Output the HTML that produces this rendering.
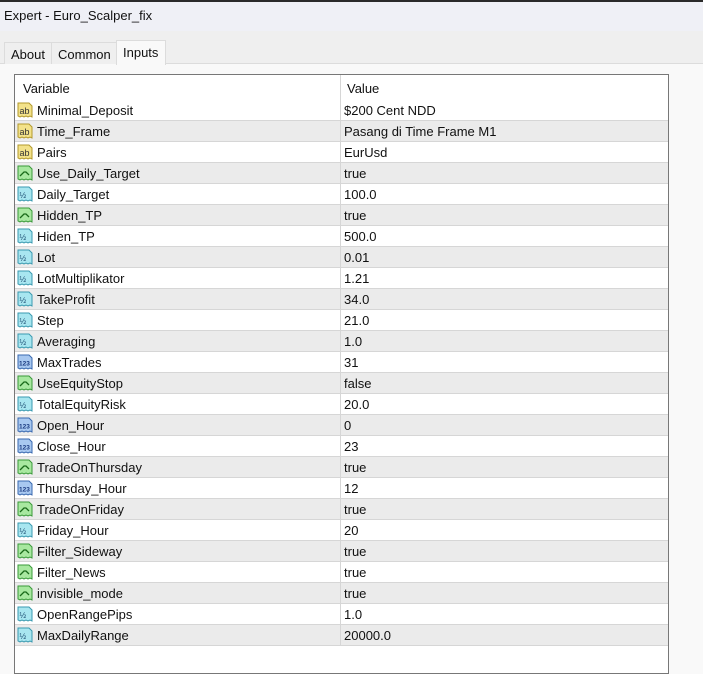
<!DOCTYPE html>
<html><head><meta charset="utf-8"><style>
*{margin:0;padding:0;box-sizing:border-box}
body{width:703px;height:663px;overflow:hidden;background:#f9f9f9;font-family:"Liberation Sans",sans-serif;font-size:13px;color:#111;position:relative}
#title{position:absolute;left:0;top:0;width:703px;height:31px;background:#eff0f6;border-top:2px solid #2a2a2a}
#title span{position:absolute;left:4px;top:6px;font-size:13px}
#tabbar{position:absolute;left:0;top:31px;width:703px;height:33px;background:#efefef;border-bottom:1px solid #dcdcdc}
.tab{position:absolute;top:11px;height:22px;border:1px solid #dcdcdc;border-bottom:none;background:#efefef;padding:4px 6px;font-size:13px}
.tab.sel{top:9px;height:25px;background:#f9f9f9;padding-top:4px}
#table{position:absolute;left:14px;top:74px;width:655px;height:600px;border:1px solid #777;background:#fff}
.row{position:absolute;left:0;width:653px;height:21px;border-bottom:1px solid #d6d6d6}
.row.alt{background:#ebebeb}
.row .n{position:absolute;left:22px;top:3px}
.row .v{position:absolute;left:329px;top:3px}
.row .d{position:absolute;left:325px;top:0;width:1px;height:21px;background:#d6d6d6}
.row svg{position:absolute;left:2px;top:2px}
#hdr{position:absolute;left:0;top:0;width:653px;height:25px;background:#fff}
#hdr .a{position:absolute;left:8px;top:6px}
#hdr .b{position:absolute;left:332px;top:6px}
#hdr .d{position:absolute;left:325px;top:0;width:1px;height:25px;background:#d6d6d6}
</style></head><body>
<div id="title"><span>Expert - Euro_Scalper_fix</span></div>
<div id="tabbar">
<div class="tab" style="left:4px;width:48px">About</div>
<div class="tab" style="left:51px;width:66px">Common</div>
<div class="tab sel" style="left:116px;width:50px">Inputs</div>
</div>
<div id="table">
<div id="hdr"><span class="a">Variable</span><div class="d"></div><span class="b">Value</span></div>
<div id="rows"></div>
</div>
<script>
var ab='<svg width="17" height="17" viewBox="0 0 17 17"><path d="M1 1h11l3 3v11l-2-1-2 1-2-1-2 1-2-1-2 1-2-1z" fill="#f3e28a" stroke="#b39a2c"/><text x="2.5" y="12" font-size="9" font-family="Liberation Sans" fill="#333">ab</text></svg>';
var bl='<svg width="17" height="17" viewBox="0 0 17 17"><path d="M1 1h11l3 3v11l-2-1-2 1-2-1-2 1-2-1-2 1-2-1z" fill="#a8e8a0" stroke="#3a9a3a"/><path d="M3 11l4-4h2l3 3" stroke="#1a6a1a" fill="none" stroke-width="1.3"/></svg>';
var db='<svg width="17" height="17" viewBox="0 0 17 17"><path d="M1 1h11l3 3v11l-2-1-2 1-2-1-2 1-2-1-2 1-2-1z" fill="#a8e6f0" stroke="#3a9ab0"/><text x="2.5" y="12" font-size="8" font-family="Liberation Sans" fill="#1a4a70">½</text></svg>';
var it='<svg width="17" height="17" viewBox="0 0 17 17"><path d="M1 1h11l3 3v11l-2-1-2 1-2-1-2 1-2-1-2 1-2-1z" fill="#a8c8f0" stroke="#3a6ab0"/><text x="2" y="11.5" font-size="6.5" font-weight="bold" font-family="Liberation Sans" fill="#1a3a80">123</text></svg>';
var d=[[ab,"Minimal_Deposit","$200 Cent NDD"],[ab,"Time_Frame","Pasang di Time Frame M1"],[ab,"Pairs","EurUsd"],[bl,"Use_Daily_Target","true"],[db,"Daily_Target","100.0"],[bl,"Hidden_TP","true"],[db,"Hiden_TP","500.0"],[db,"Lot","0.01"],[db,"LotMultiplikator","1.21"],[db,"TakeProfit","34.0"],[db,"Step","21.0"],[db,"Averaging","1.0"],[it,"MaxTrades","31"],[bl,"UseEquityStop","false"],[db,"TotalEquityRisk","20.0"],[it,"Open_Hour","0"],[it,"Close_Hour","23"],[bl,"TradeOnThursday","true"],[it,"Thursday_Hour","12"],[bl,"TradeOnFriday","true"],[db,"Friday_Hour","20"],[bl,"Filter_Sideway","true"],[bl,"Filter_News","true"],[bl,"invisible_mode","true"],[db,"OpenRangePips","1.0"],[db,"MaxDailyRange","20000.0"]];
var h='';d.forEach(function(r,i){h+='<div class="row'+(i%2?' alt':'')+'" style="top:'+(25+i*21)+'px">'+r[0]+'<span class="n">'+r[1]+'</span><div class="d"></div><span class="v">'+r[2]+'</span></div>';});
document.getElementById('rows').innerHTML=h;
</script>
</body></html>
